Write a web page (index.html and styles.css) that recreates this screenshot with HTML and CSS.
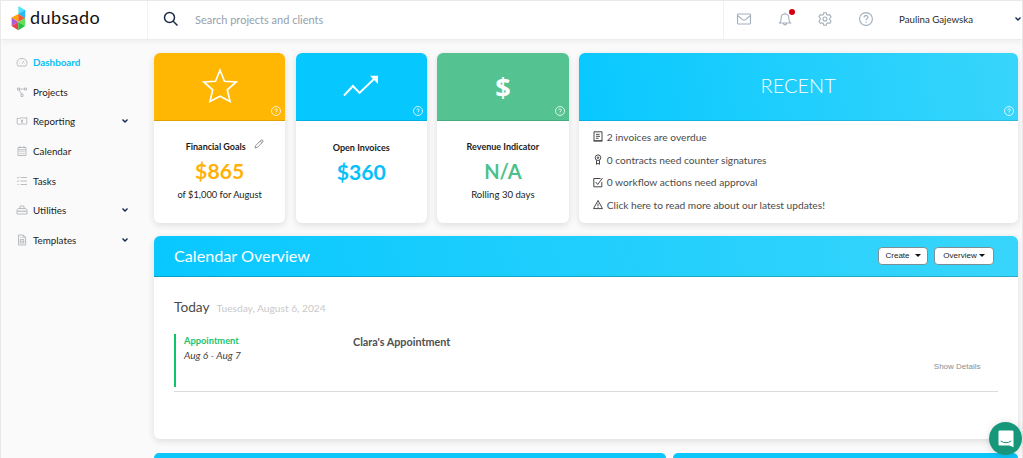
FILE: index.html
```html
<!DOCTYPE html>
<html lang="en">
<head>
    <meta charset="UTF-8">
    <meta name="viewport" content="width=device-width, initial-scale=1.0">
    <title>Dubsado</title>
    <link rel="stylesheet" href="styles.css">
</head>
<body>
    <header class="topbar">
        <a class="logo">
            <svg width="15" height="26" viewBox="0 0 15 26">
                <path fill="#5be0fb" d="M7.3 1 14.2 5v7.5L7.3 9z"/>
                <path fill="#2bb9ee" d="M7.3 9 14.2 5v8.5z"/>
                <path fill="#ffa800" d="M.6 12.6 7.3 9v8z"/>
                <path fill="#f9572b" d="M7.3 9l6.9 4.2L7.3 17z"/>
                <path fill="#b45ad0" d="M.6 12.6 7.3 17 .6 21z"/>
                <path fill="#ef3f4e" d="M.6 21 7.3 17v8.2z"/>
                <path fill="#5fe25a" d="M14.2 13.2V21L7.3 17z"/>
                <path fill="#22c43c" d="M7.3 17l6.9 4-6.9 4.2z"/>
            </svg>
            <span class="logo-text">dubsado</span>
        </a>
        <div class="search">
            <svg width="16" height="16" viewBox="0 0 16 16" fill="none" stroke="#1b2c4a" stroke-width="1.5"><circle cx="6.5" cy="6.5" r="5"/><path d="M10.2 10.2 14.5 14.5"/></svg>
            <span class="search-text">Search projects and clients</span>
        </div>
        <div class="top-icons">
            <svg width="16" height="16" viewBox="0 0 16 16"><rect x="1.5" y="3" width="13" height="10" rx=".8"/><path d="M1.8 4.8 6.500 8.600Q8 9.600 9.500 8.600L14.2 4.800"/></svg>
            <span class="bell">
                <svg width="16" height="16" viewBox="0 0 16 16"><path d="M2.6 12c1.4-1.4 1.6-2.6 1.6-5.2C4.2 4.4 5.7 3 8 3s3.8 1.4 3.8 3.8c0 2.6.2 3.8 1.6 5.2zM6.5 12.4c.2 2 2.8 2 3 0M8 3V1.5"/></svg>
                <span class="bell-dot"></span>
            </span>
            <svg width="16" height="16" viewBox="0 0 16 16"><path d="M6.8 1.8h2.4l.5 1.7 1.3.7 1.7-.5 1.300 2.100L12.800 7.200v1.600L14 10.200l-1.300 2.100-1.700-.5-1.300.7-.5 1.700H6.800l-.5-1.700-1.300-.7-1.700.5L2 10.200l1.200-1.400V7.200L2 5.800l1.300-2.100 1.700.5 1.300-.7z"/><circle cx="8" cy="8" r="2"/></svg>
            <svg width="16" height="16" viewBox="0 0 16 16"><circle cx="8" cy="8" r="6.4"/><path d="M6 6.500C6 5.200 6.800 4.600 8 4.600s2 .7 2 1.700c0 1.300-2 1.400-2 3M8 10.600v1.200"/></svg>
        </div>
        <div class="user">
            <span class="user-name">Paulina Gajewska</span>
            <svg class="chev" width="8" height="6" viewBox="0 0 8 6"><path d="M1.5 1.5 4 4l2.500-2.500"/></svg>
        </div>
    </header>

    <div class="layout">
        <nav class="sidebar">
            <a class="nav-item active">
                <svg width="12" height="12" viewBox="0 0 12 12"><path d="M2 10C-.5 6 2 2.5 6 2.5S12.500 6 10 10zM6 7.800 8 4.800M3 7h.6M4.200 4.800l.3.3M8.500 7H9"/></svg>
                <span>Dashboard</span>
            </a>
            <a class="nav-item">
                <svg width="12" height="12" viewBox="0 0 12 12"><path d="M1.5 2h2v2h-2zM8.5 2h2v2h-2zM5 8h2v2.5H5zM3.5 3h5M3 4l2.5 4"/></svg>
                <span>Projects</span>
            </a>
            <a class="nav-item">
                <svg width="12" height="12" viewBox="0 0 12 12"><path d="M1.200 3.200C3 4.200 4.800 2.400 6.600 2.800S9.600 3.300 10.800 2.500v6.300c-1.800 1-3.300-.3-5.100.1s-3 .7-4.500 0zM6 4.600v3M5 5.500h2M5 7h2"/></svg>
                <span>Reporting</span>
                <svg class="chev" width="8" height="6" viewBox="0 0 8 6"><path d="M1.5 1.5 4 4l2.500-2.500"/></svg>
            </a>
            <a class="nav-item">
                <svg width="12" height="12" viewBox="0 0 12 12"><path d="M2 2.500h8v8H2zM2 4.800h8M4 1v2M8 1v2"/><path d="M3.500 6.700h5M3.500 8.700h5" stroke-dasharray="1.200 .7"/></svg>
                <span>Calendar</span>
            </a>
            <a class="nav-item">
                <svg width="12" height="12" viewBox="0 0 12 12"><path d="M4.500 2.500H11M4.500 6H11M4.500 9.500H11M1 2.500l.8.8L3.200 1.700M1 6l.8.8L3.200 5.200M1.500 9.500h1.300"/></svg>
                <span>Tasks</span>
            </a>
            <a class="nav-item">
                <svg width="12" height="12" viewBox="0 0 12 12"><path d="M1 10V6.200L2.300 4.500h7.400L11 6.200V10zM4 4.500V2h4v2.500M1 7.200h10M4 6.400v1.600M8 6.400v1.600"/></svg>
                <span>Utilities</span>
                <svg class="chev" width="8" height="6" viewBox="0 0 8 6"><path d="M1.5 1.5 4 4l2.500-2.500"/></svg>
            </a>
            <a class="nav-item">
                <svg width="12" height="12" viewBox="0 0 12 12"><path d="M2.500 1h4.800L9.600 3.300V11H2.500zM7.200 1v2.400h2.400M4.200 5.500h3.600v3.600H4.200zM4.200 7.300h3.600M4 3.300h1.600"/></svg>
                <span>Templates</span>
                <svg class="chev" width="8" height="6" viewBox="0 0 8 6"><path d="M1.5 1.5 4 4l2.500-2.500"/></svg>
            </a>
        </nav>

        <main class="content">
            <section class="stats">
                <div class="card goals">
                    <div class="card-head">
                        <svg width="36" height="36" viewBox="0 0 36 36" fill="none" stroke="#fff" stroke-width="1.7"><path d="M18 2.300 22.500 13.300 34.200 14 25.300 21.800 28 33.400 18 28.300 8 33.400 10.700 21.800 1.800 14 13.500 13.300z"/></svg>
                        <svg class="help" width="10" height="10" viewBox="0 0 10 10"><circle cx="5" cy="5" r="4.5"/><path d="M3.700 4.200C3.800 2.500 6.300 2.500 6.300 4.100 6.300 5 5 5 5 6M5 6.700v.8"/></svg>
                    </div>
                    <div class="card-body">
                        <h4>Financial Goals <svg class="pencil" width="10" height="10" viewBox="0 0 10 10"><path d="M1 9 1.700 6.500 7 1.200Q8 .6 8.800 1.400T8.700 3L3.500 8.300zM6.200 2 8 3.800"/></svg></h4>
                        <p class="amount">$865</p>
                        <p class="note">of $1,000 for August</p>
                    </div>
                </div>
                <div class="card invoices">
                    <div class="card-head">
                        <svg width="36" height="24" viewBox="0 0 36 24"><path d="M1 21.500 10 12l6.500 7L31 5" fill="none" stroke="#fff" stroke-width="1.9"/><path d="M27 1.800h8V10z" fill="#fff"/></svg>
                        <svg class="help" width="10" height="10" viewBox="0 0 10 10"><circle cx="5" cy="5" r="4.5"/><path d="M3.700 4.200C3.800 2.500 6.300 2.500 6.300 4.100 6.300 5 5 5 5 6M5 6.700v.8"/></svg>
                    </div>
                    <div class="card-body">
                        <h4>Open Invoices</h4>
                        <p class="amount">$360</p>
                    </div>
                </div>
                <div class="card revenue">
                    <div class="card-head">
                        <span class="dollar">$</span>
                        <svg class="help" width="10" height="10" viewBox="0 0 10 10"><circle cx="5" cy="5" r="4.5"/><path d="M3.700 4.200C3.800 2.500 6.300 2.500 6.300 4.100 6.300 5 5 5 5 6M5 6.700v.8"/></svg>
                    </div>
                    <div class="card-body">
                        <h4>Revenue Indicator</h4>
                        <p class="amount">N/A</p>
                        <p class="note">Rolling 30 days</p>
                    </div>
                </div>
                <div class="card recent">
                    <div class="card-head">
                        <h2>RECENT</h2>
                        <svg class="help" width="10" height="10" viewBox="0 0 10 10"><circle cx="5" cy="5" r="4.5"/><path d="M3.700 4.200C3.800 2.500 6.300 2.500 6.300 4.100 6.300 5 5 5 5 6M5 6.700v.8"/></svg>
                    </div>
                    <ul class="recent-list">
                        <li><svg width="10" height="11" viewBox="0 0 10 11"><path d="M1 .8h8v9H1zM3 3.300h3.500M3 5.300h4M3 7.300h2.500M.5 10h9"/></svg><span>2 invoices are overdue</span></li>
                        <li><svg width="10" height="11" viewBox="0 0 10 11"><circle cx="5" cy="3.700" r="2.800"/><circle cx="5" cy="3.700" r=".8"/><path d="M3.500 6.300v4L5 9.400l1.500.9v-4"/></svg><span>0 contracts need counter signatures</span></li>
                        <li><svg width="10" height="11" viewBox="0 0 10 11"><path d="M7.500 1.500H.8v8.300h8V5M2.700 5l2 2.500L9.500 1"/></svg><span>0 workflow actions need approval</span></li>
                        <li><svg width="10" height="11" viewBox="0 0 10 11"><path d="M5 1.500 9.500 9.600H.5zM5 4.500v2.700M5 7.800v1"/></svg><span>Click here to read more about our latest updates!</span></li>
                    </ul>
                </div>
            </section>

            <section class="card calendar">
                <div class="calendar-head">
                    <h3>Calendar Overview</h3>
                    <button class="btn-create">Create <i class="caret"></i></button>
                    <button class="btn-overview">Overview <i class="caret"></i></button>
                </div>
                <div class="calendar-body">
                    <div class="day">
                        <span class="today">Today</span>
                        <span class="date">Tuesday, August 6, 2024</span>
                    </div>
                    <div class="event">
                        <div class="event-when">
                            <div class="event-type">Appointment</div>
                            <div class="event-dates">Aug 6 - Aug 7</div>
                        </div>
                        <div class="event-title">Clara's Appointment</div>
                        <a class="details">Show Details</a>
                    </div>
                </div>
            </section>

            <section class="next-row">
                <div class="next-card"></div>
                <div class="next-card"></div>
            </section>
        </main>
    </div>

    <div class="chat">
        <svg width="16" height="18" viewBox="0 0 16 18"><path fill="#fff" d="M1.800.5h12.400Q15.500.5 15.500 1.800V17.300L11.500 15.500H1.800Q.5 15.500.5 14.200V1.800Q.5.5 1.800.5z"/><path fill="none" stroke="#17977a" stroke-linecap="round" d="M3 11.200q5 3.300 10 0"/></svg>
    </div>
</body>
</html>
```
FILE: styles.css
```css
* {
    box-sizing: border-box;
}
body {
    margin: 0;
    height: 458px;
    overflow: hidden;
    font-family: Lato, "Open Sans", sans-serif;
    font-size: 10px;
    color: #1c1c1c;
    background: #fafafa;
    border: 1px solid #e9e9e9;
    border-bottom: none;
}
h2, h3, h4, p, ul {
    margin: 0;
    padding: 0;
    font-weight: 400;
}
svg {
    display: block;
    flex: none;
}
span, a, h2, h3, h4, p, button {
    white-space: nowrap;
}

/* top bar */
.topbar {
    display: flex;
    height: 39px;
    background: #fff;
    border-bottom: 1px solid #ececec;
    box-shadow: 0 2px 6px rgba(0,0,0,0.05);
}
.logo {
    display: flex;
    width: 147px;
    padding: 4px 0 0 10px;
    border-right: 1px solid #f3f3f3;
}
.logo-text {
    margin: 1px 0 0 4px;
    font-size: 18px;
    line-height: 22px;
    letter-spacing: 0.4px;
    color: #111;
}
.search {
    display: flex;
    flex: 1;
    align-items: center;
    padding: 0 0 2px 15px;
    gap: 16px;
}
.search-text {
    font-size: 11px;
    color: #96a0ab;
}
.top-icons {
    display: flex;
    align-items: center;
    gap: 24.5px;
    width: 163px;
    padding: 0 0 2px 12px;
    border-left: 1px solid #f0f0f0;
}
.search + .top-icons {
    margin-left: -1px;
    width: 164px;
}
.top-icons svg {
    fill: none;
    stroke: #a3afbd;
    stroke-width: 1.1;
}
.bell {
    position: relative;
}
.bell-dot {
    position: absolute;
    top: -2px;
    right: -2px;
    width: 6px;
    height: 6px;
    border-radius: 50%;
    background: #d4000f;
}
.user {
    display: flex;
    align-items: center;
    justify-content: space-between;
    width: 135px;
    padding: 0 0 2px 12px;
}
.user-name {
    font-size: 9.7px;
    color: #2b2b2b;
}
.chev {
    fill: none;
    stroke: #14284b;
    stroke-width: 1.4;
}

/* sidebar */
.layout {
    display: flex;
}
.sidebar {
    width: 153px;
    padding-top: 7px;
}
.nav-item {
    display: flex;
    align-items: center;
    height: 29.7px;
    padding: 0 25px 0 15px;
    font-size: 9.8px;
}
.nav-item span {
    flex: 1;
    margin-left: 5px;
}
.nav-item svg:not(.chev) {
    fill: none;
    stroke: #a9adb3;
    stroke-width: 0.8;
}
.nav-item.active {
    color: #05bff5;
    font-weight: 700;
}

/* cards */
.content {
    width: 863.5px;
    padding-top: 13px;
}
.stats {
    display: grid;
    grid-template-columns: 131.4px 131.4px 131.4px 1fr;
    gap: 10.2px;
    height: 169.5px;
}
.card {
    overflow: hidden;
    background: #fff;
    border-radius: 6px;
    box-shadow: 0 2px 7px rgba(0,0,0,0.12);
}
.card-head {
    position: relative;
    display: flex;
    align-items: center;
    justify-content: center;
    height: 67.5px;
    border-bottom: 1px solid rgba(0,0,0,0.12);
    color: #fff;
}
.goals .card-head {
    background: #ffb703;
}
.invoices .card-head {
    background: #06c8ff;
}
.revenue .card-head {
    background: #54c391;
}
.recent .card-head, .calendar-head {
    background: linear-gradient(80deg, #08c8ff, #38d5fb);
}
.help {
    position: absolute;
    right: 4px;
    bottom: 4px;
    fill: none;
    stroke: #fff;
    stroke-width: 0.8;
}
.dollar {
    font-family: "Open Sans", sans-serif;
    font-size: 27px;
    font-weight: 700;
}
.card-body {
    padding-top: 19px;
    text-align: center;
}
.invoices .card-body {
    padding-top: 20px;
}
h4 {
    display: flex;
    justify-content: center;
    font-size: 9px;
    line-height: 14px;
    font-weight: 700;
}
.goals h4 {
    padding-right: 8px;
}
.pencil {
    margin: -1px -18px 0 8px;
    fill: none;
    stroke: #777;
    stroke-width: 0.8;
}
.amount {
    font-size: 21.2px;
    line-height: 26px;
    font-weight: 700;
    margin-top: 4px;
}
.goals .amount {
    color: #ffb108;
}
.invoices .amount {
    color: #06bffb;
}
.revenue .amount {
    color: #4cc08b;
    font-size: 20px;
}
.note {
    font-size: 9.6px;
    line-height: 14px;
    margin-top: 4px;
}
.goals .note {
    font-size: 9.3px;
}
.recent h2 {
    margin-top: -2px;
    font-size: 20px;
    font-weight: 300;
}
.recent-list {
    padding: 5px 0 0 14px;
    list-style: none;
}
.recent-list li {
    display: flex;
    align-items: center;
    gap: 4px;
    height: 22.7px;
    font-size: 10.2px;
    color: #4b4b4b;
}
.recent-list svg {
    fill: none;
    stroke: #333;
    stroke-width: 0.9;
}

/* calendar overview */
.calendar {
    height: 203px;
    margin-top: 13.5px;
}
.calendar-head {
    display: flex;
    align-items: center;
    height: 40.5px;
    padding: 0 23.5px 0 20px;
    border-bottom: 1px solid rgba(0,0,0,0.2);
}
.calendar-head h3 {
    flex: 1;
    margin-top: -1px;
    font-size: 16.2px;
    color: #fff;
}
.calendar-head button {
    display: flex;
    align-items: center;
    justify-content: center;
    height: 18px;
    padding: 0;
    font-family: "Liberation Sans", sans-serif;
    font-size: 8px;
    color: #222;
    background: #fff;
    border: 1px solid #7d8f96;
    border-radius: 4px;
}
.calendar-head .btn-create {
    width: 50px;
    margin-right: 6px;
    gap: 5px;
}
.calendar-head .btn-overview {
    width: 60px;
    gap: 2px;
}
.caret {
    border: 3px solid transparent;
    border-top: 3px solid #111;
    border-bottom: 0;
}
.calendar-body {
    padding: 20px 20px 0;
}
.day {
    display: flex;
    align-items: baseline;
    gap: 7px;
    line-height: 20px;
}
.today {
    font-size: 13.7px;
    color: #4a4a4a;
}
.date {
    font-size: 10.2px;
    color: #c9c9c9;
}
.event {
    display: flex;
    height: 58.5px;
    margin-top: 16px;
    border-bottom: 1px solid #dcdcdc;
}
.event-when {
    width: 179px;
    height: 53px;
    padding-left: 8px;
    border-left: 2px solid #0dc566;
    line-height: 15px;
}
.event-type {
    margin-top: -1px;
    font-size: 9.3px;
    font-weight: 700;
    color: #1cc46c;
}
.event-dates {
    font-size: 10.1px;
    font-style: italic;
    color: #444;
}
.event-title {
    flex: 1;
    font-size: 10.8px;
    line-height: 15px;
    font-weight: 700;
    color: #505050;
}
.details {
    margin: 27px 17px 0 0;
    font-family: "Liberation Sans", sans-serif;
    font-size: 8px;
    line-height: 12px;
    color: #888e93;
}
.next-row {
    display: flex;
    gap: 7px;
    margin-top: 14px;
}
.next-card {
    width: 512px;
    height: 5px;
    border-radius: 6px 6px 0 0;
    background: #0bc6fb;
}
.next-card + .next-card {
    width: 344.5px;
}

/* chat bubble */
.chat {
    position: fixed;
    right: 1px;
    bottom: 3px;
    display: flex;
    align-items: center;
    justify-content: center;
    width: 33px;
    height: 33px;
    border-radius: 50%;
    background: #17977a;
    box-shadow: 0 1px 8px rgba(0,0,0,0.15);
}
```
